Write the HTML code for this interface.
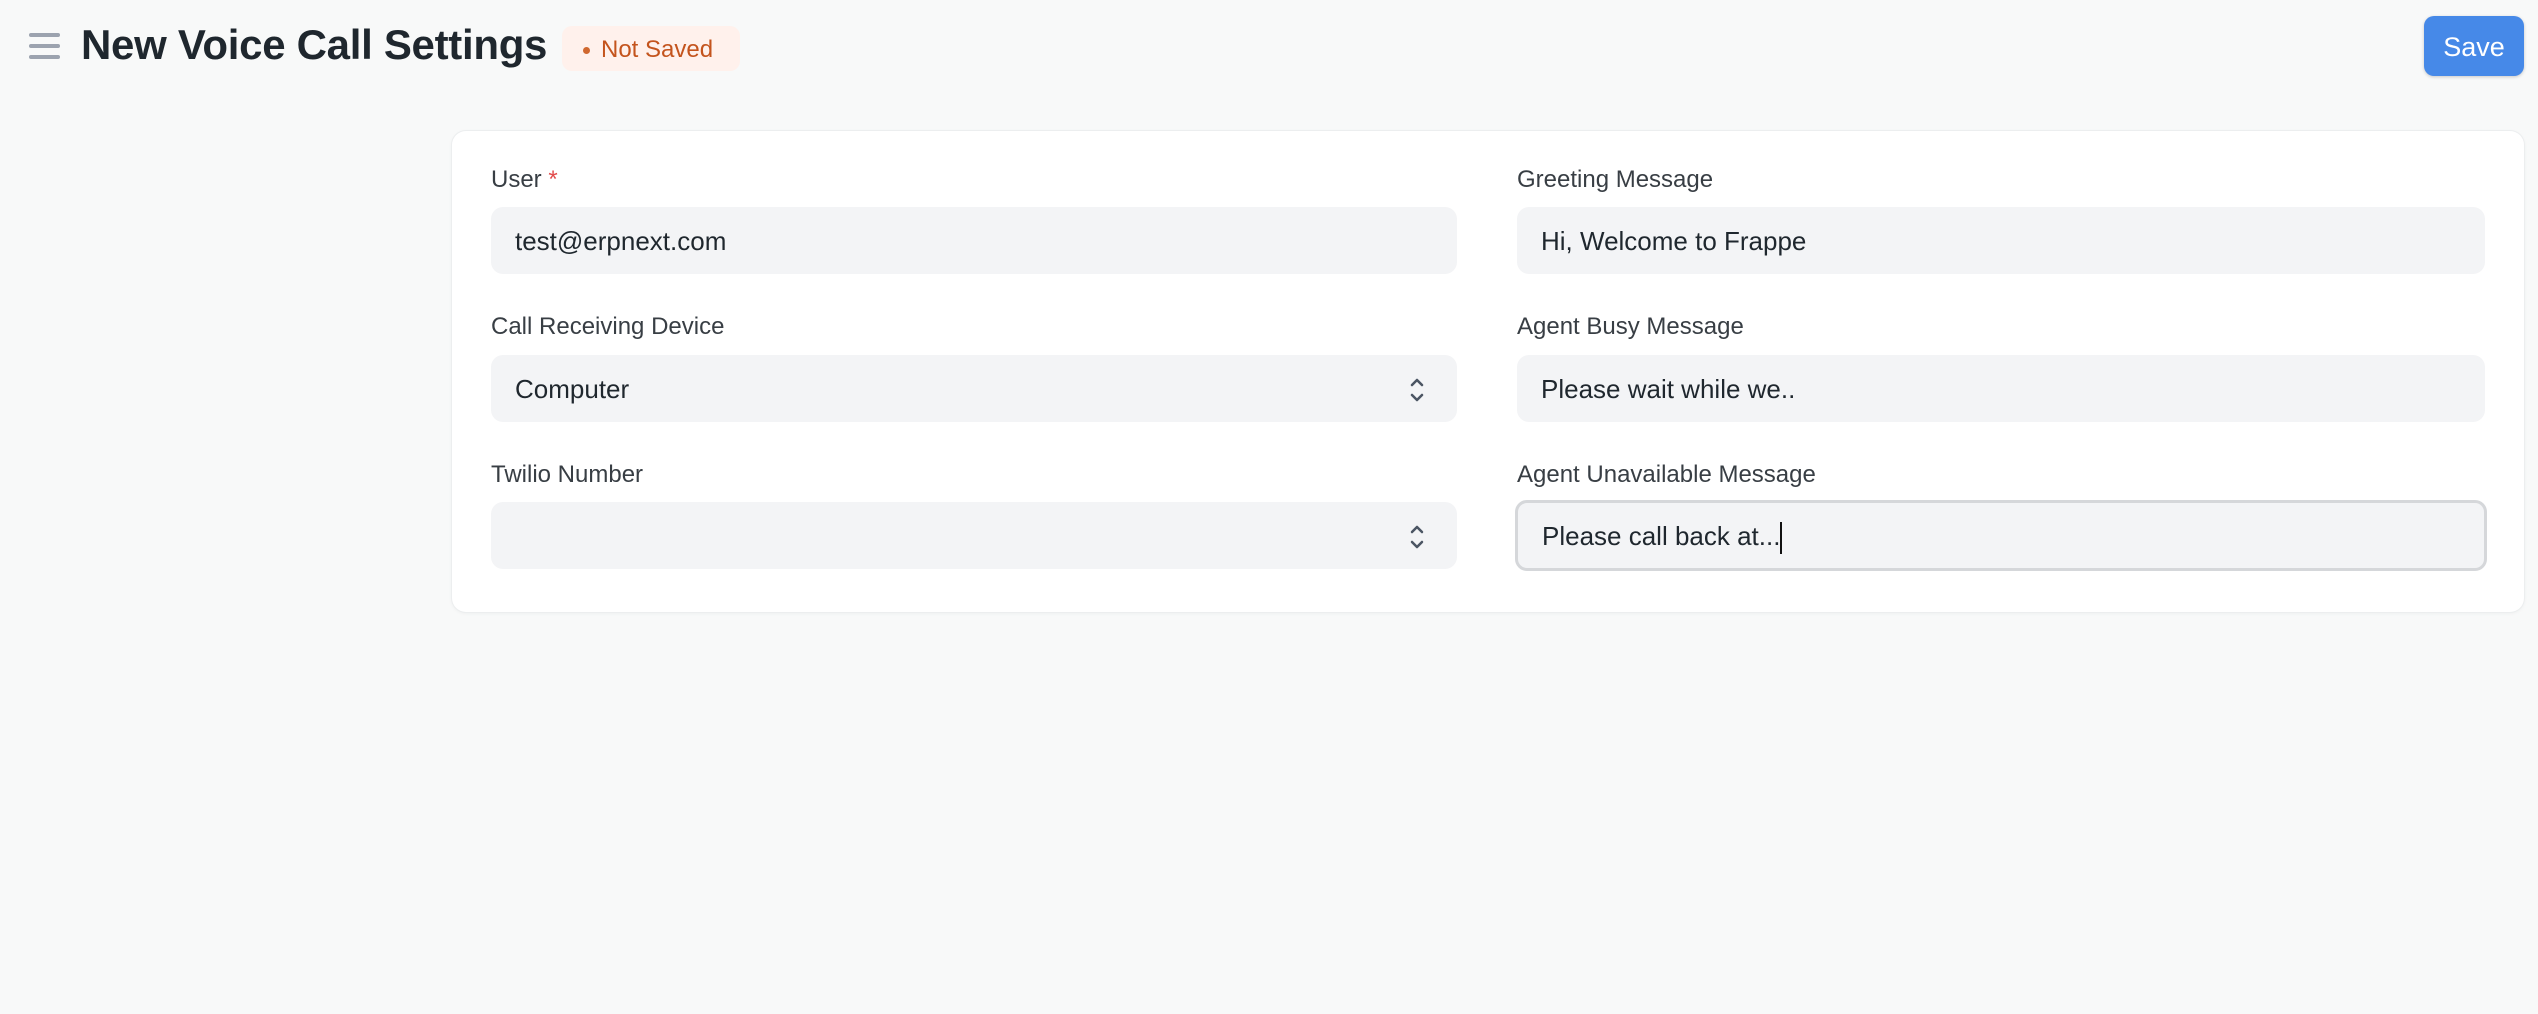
<!DOCTYPE html>
<html><head><meta charset="utf-8"><style>
*{box-sizing:border-box;margin:0;padding:0}
body{width:2538px;height:1014px;background:#f8f9f9;font-family:"Liberation Sans",sans-serif;position:relative;overflow:hidden;color:#1f272e}
.abs{position:absolute}
.ham div{position:absolute;left:0;width:31px;height:4px;border-radius:2px;background:#9ca3af}
.title{left:81px;top:21px;font-size:42px;font-weight:bold;color:#1f272e;letter-spacing:-0.3px}
.pill{left:562px;top:26px;width:178px;height:45px;background:#fff1ec;border-radius:10px;color:#c4541d;font-size:24px;line-height:47px;padding-left:39px}
.pill:before{content:"";position:absolute;left:21px;top:21px;width:7px;height:7px;border-radius:50%;background:#d0682f}
.save{left:2424px;top:16px;width:100px;height:60px;background:#4689e8;border-radius:10px;color:#fff;font-size:27px;line-height:62px;text-align:center;box-shadow:0 1px 3px rgba(0,0,0,.2)}
.card{left:452px;top:131px;width:2072px;height:481px;background:#fff;border-radius:14px;box-shadow:0 0 0 1px #eceeef,0 1px 4px rgba(0,0,0,.06)}
.lbl{font-size:24px;color:#383e44}
.inp{height:67px;background:#f3f4f6;border-radius:12px;font-size:26px;line-height:69px;padding-left:24px;color:#1f272e}
.req{color:#e24c4c}
</style></head><body>
<div class="abs ham" style="left:29px;top:33px;width:31px;height:26px">
<div style="top:0"></div><div style="top:11px"></div><div style="top:22px"></div></div>
<div class="abs title">New Voice Call Settings</div>
<div class="abs pill">Not Saved</div>
<div class="abs save">Save</div>
<div class="abs card"></div>

<div class="abs lbl" style="left:491px;top:166px">User <span class="req">*</span></div>
<div class="abs inp" style="left:491px;top:207px;width:966px">test@erpnext.com</div>
<div class="abs lbl" style="left:491px;top:313px">Call Receiving Device</div>
<div class="abs inp" style="left:491px;top:355px;width:966px">Computer</div>
<div class="abs lbl" style="left:491px;top:461px">Twilio Number</div>
<div class="abs inp" style="left:491px;top:502px;width:966px"></div>

<svg class="abs" style="left:1407px;top:374px" width="20" height="32" viewBox="0 0 20 32"><path d="M5 11l5-5 5 5M5 21l5 5 5-5" fill="none" stroke="#4b5563" stroke-width="2.5" stroke-linecap="round" stroke-linejoin="round"/></svg>
<svg class="abs" style="left:1407px;top:521px" width="20" height="32" viewBox="0 0 20 32"><path d="M5 11l5-5 5 5M5 21l5 5 5-5" fill="none" stroke="#4b5563" stroke-width="2.5" stroke-linecap="round" stroke-linejoin="round"/></svg>

<div class="abs lbl" style="left:1517px;top:166px">Greeting Message</div>
<div class="abs inp" style="left:1517px;top:207px;width:968px">Hi, Welcome to Frappe</div>
<div class="abs lbl" style="left:1517px;top:313px">Agent Busy Message</div>
<div class="abs inp" style="left:1517px;top:355px;width:968px">Please wait while we..</div>
<div class="abs lbl" style="left:1517px;top:461px">Agent Unavailable Message</div>
<div class="abs inp" style="left:1515px;top:500px;width:972px;height:71px;border:3px solid #d5d7da;line-height:67px;padding-left:24px">Please call back at...<span style="display:inline-block;width:2px;height:32px;background:#111;vertical-align:middle"></span></div>
</body></html>
